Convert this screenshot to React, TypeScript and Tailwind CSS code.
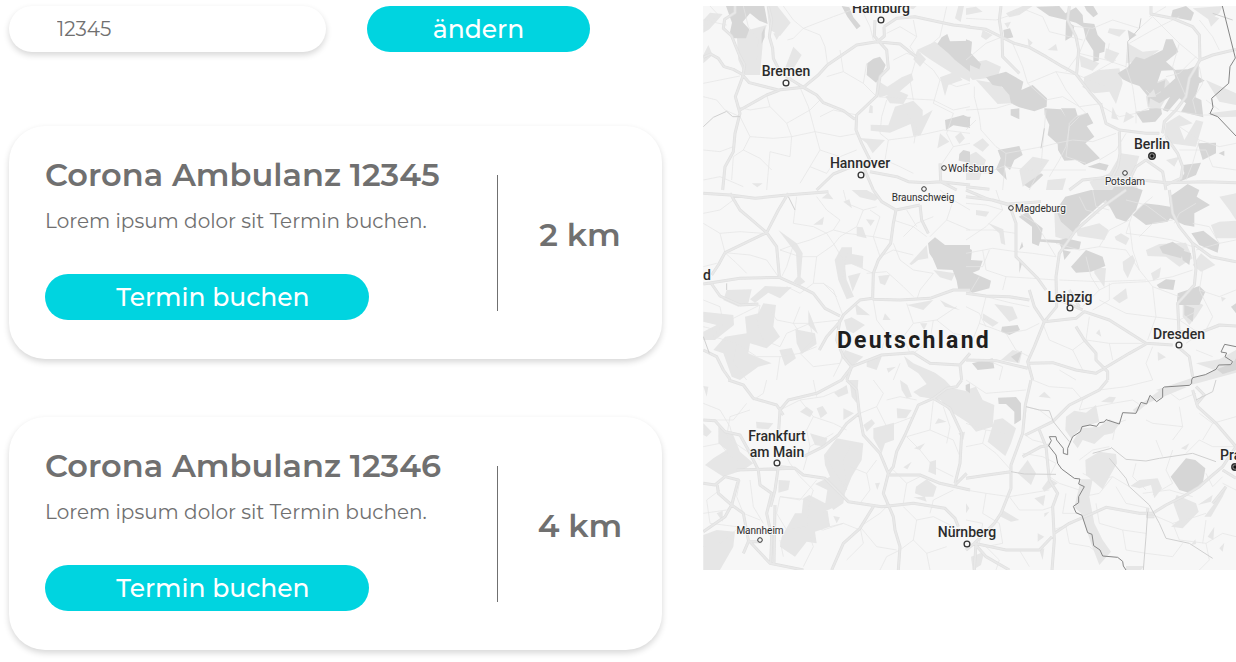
type Sheet = {
  x: number;
  y: number;
  light: string;
  dark: string;
  minor: string;
  major: string;
  grey: string;
  border: string;
};

// Each sheet of the map is drawn at three units per map unit from its own corner.
const sheets: Sheet[] = [
  {
    x: 700,
    y: 0,
    light:
      'M110 100L200 75L190 110L180 225H135L115 180ZM200 18H232L272 68L240 108L208 88ZM10 60L30 38L68 42L55 58L28 88L10 98ZM10 165L25 135L38 165L10 190ZM280 140L305 165L275 215L255 205ZM220 100H242L230 120ZM530 240L562 260L605 232L635 220L640 240L598 275L540 292L528 280ZM556 290L590 270L625 285L610 312L570 310ZM585 320L640 302L668 330V348L698 330L662 405L640 408L632 372L570 398L512 392V374L565 376ZM650 150L705 125L790 185L810 205V245L765 225L725 200L690 178ZM720 232L765 215L788 240L745 255L735 288ZM480 414L555 420L518 460L500 430ZM720 400L748 425L712 445ZM765 410L782 396L795 415L778 432ZM775 18H792L782 66L765 55ZM155 550H188L172 562ZM510 315L518 318V340L506 338ZM652 150L640 178L660 200L678 178ZM600 18L650 18L640 28Z',
    dark: 'M78 18H193L203 72L178 62L150 40L128 66L148 88L138 115H98L90 96L96 68ZM185 100L194 80V112L185 132ZM502 190L520 176L540 170L557 195L545 226L528 248L500 225ZM725 112L742 102L750 124L810 122V215L765 180L745 160L712 132ZM735 360L790 345L810 354V384L760 376L738 390ZM778 462L790 450L810 455V488L776 482ZM425 18L448 22L460 52L482 78L470 88L442 50Z',
    minor:
      'M10 60L80 75M130 18L145 80L175 120L170 200M250 18L280 60L310 85L360 105L375 140L382 190M310 85L280 115L262 120M310 85L400 50L455 30M10 250L60 240L120 228M10 290L50 300L75 330L120 350L150 410L220 415L275 410L345 395L420 410L475 400M200 285L210 320L260 370L275 410L270 470L210 455L200 570M300 262L325 320L345 395M260 370L330 330L360 300M150 410L130 450L180 475L215 510M130 450L100 470L95 540M10 450L60 455L100 440M345 395L360 450L420 470L470 450M360 450L330 500L300 550M380 230L430 215L490 250L530 290L600 295L700 300L760 330L810 320M430 215L420 150M490 250L500 190M560 300L545 350L540 400L565 420L555 480L600 500L640 520M565 420L640 410L730 390L810 400M650 170L630 240L640 300M650 170L700 210L720 240L770 260L810 250M640 60L650 110L630 140L650 170L720 110L740 20M560 100L600 80L650 110M720 240L700 310L760 340L740 400L760 440L720 500M10 540L60 530L130 560M330 500L380 520L400 490M30 18L55 45L20 75M480 18L510 80L520 120M470 345L400 330L360 350M210 320L150 330L110 320M620 340L650 380L642 430M760 440L810 430M580 180L620 160L650 170',
    major:
      'M105 18V38L74 58L70 85L95 108L118 165L134 195L128 230L106 290L120 340L105 400L100 455L75 500L68 570M10 172L32 162L55 175L72 200L100 208L125 222L148 248L235 270L310 262L355 225L382 195L470 135L530 125L600 132L650 172M120 330L200 285L245 268M310 262L350 285L370 308L430 332L465 358M205 20L215 60L208 110L218 145L220 175L240 215L275 240L310 262M552 80L590 55L645 50L700 62L760 75L810 80M525 60L523 108L535 122L560 150L565 205L540 230L530 288L470 345L468 390L485 430L510 480L490 500L520 570M552 80L553 108L530 128M510 515L590 530L625 545L680 548L720 545L810 555M350 570L400 522L480 490M720 490L722 545L770 570',
    grey: 'M10 380L40 352L80 334L98 350L120 350',
    border: '',
  },
  {
    x: 966,
    y: 0,
    light:
      'M120 40L170 18H200L160 45L130 52ZM10 190L60 180L105 200L95 230L60 235L20 240L0 220V190ZM30 240L90 250L150 290L135 310L95 312ZM245 150L270 132L275 152ZM340 165L400 190L380 212L345 200ZM420 145L460 160L440 190L415 175ZM355 230L400 210L460 205L470 250L450 312L430 275L385 280L350 262ZM485 130L530 155L580 150L540 180L480 190ZM540 290L560 250L600 235L620 260L580 330L545 320ZM680 25L770 18L760 40L730 60ZM440 320L458 360L436 355ZM480 335L505 350L472 368ZM600 370L640 345L680 370L640 380L655 420L690 360L712 365L690 440L610 430L595 405ZM720 240L810 280V315L760 305ZM725 340L810 330V350L760 352ZM0 470L30 455L60 480L40 540L0 540ZM20 435L50 415L70 435L50 455ZM160 510L200 470L250 480L215 530L170 560ZM245 540L300 535L290 570H240ZM370 545L430 520L465 460L520 468L500 530L520 575L500 590L460 590L430 620L400 600ZM30 20L50 35L0 45V25ZM115 70L135 65L125 85ZM430 85L480 90L460 110L425 98ZM720 40L760 55L735 80ZM50 90L80 105L60 120L45 110ZM185 115L200 128L188 142ZM600 480L640 470L625 500Z',
    dark: 'M210 20L280 18L298 40L330 22L350 45L352 68L385 72L395 105L418 130L415 155L400 160L398 182L382 185V152L360 118L352 82L330 68L300 60L250 48ZM355 18H382L396 42L382 52L362 32ZM300 62L325 78L318 110L298 122ZM0 118L18 125L15 160L45 192L40 208L0 190ZM60 232L120 215L172 245L166 270L200 255L243 295L242 320L205 334L160 322L135 310L130 285L108 260L80 255ZM112 90L132 85L142 112L115 118ZM134 328L160 325V358L134 346ZM235 325L285 328L300 352L285 325H328L335 348L365 338L382 370L362 378L385 410L358 430L402 475L355 495L330 480L295 482L276 450L275 432L245 405L250 375L236 345ZM620 30L660 18L684 38L675 62L615 50ZM455 220L485 202L510 170L535 178L590 150L600 118H620L637 155L600 185L628 210L586 212L570 260L545 288L520 258L495 250L470 238ZM560 255L598 240L595 265L628 235L622 210L665 208L698 195V230L716 242L700 250L688 292L706 300L712 352L645 335L660 310L640 295L605 335L590 330L612 290L580 310L552 295L548 325L585 325L588 342L568 365L530 368L508 335L550 330L545 292L570 290ZM485 90L512 105L490 120ZM95 450L160 438L170 465L145 480L132 510L115 495L122 540L90 508L104 475ZM175 555L225 520L232 525L190 565ZM365 500L400 488L428 495L420 512ZM695 430L750 428V460L710 480ZM758 460L775 452V468ZM650 495L705 488L690 525L640 545L655 520ZM0 350L15 350L0 378Z',
    minor:
      'M0 55L90 60L180 30L230 50L250 95L350 120M110 110L60 130L0 180M140 130L170 200L185 250L240 300L290 290L340 320L410 310M185 250L270 215L335 225L420 260M270 215L300 270L340 320L360 340M315 78L380 85L440 60L520 85L560 50L640 130L700 180M485 130L480 200L500 260L510 330L510 370M490 130L560 90L640 50M640 130L620 200L660 290M0 330L90 325L140 310M25 260L25 290L40 350L45 390L90 440L120 460L230 440L270 430L320 420L380 425L450 400M240 330L230 440L225 500L190 570M370 85L340 160L420 180L480 200M340 160L300 215M400 315L460 350L510 340L560 320L610 330L700 345L740 345M480 400L450 450L400 480M550 50L600 20M690 170L640 220L600 230M700 60L740 110L760 150M430 130L420 180M600 400L570 430L540 480M640 380L700 420L760 440L810 430M640 450L720 450L740 500L810 510M700 420L680 490L660 540M120 460L110 570M0 510L60 520L110 500L200 510L300 510L360 510M250 530L280 480L300 440L310 380L340 350M540 270L560 290L585 275M360 340L330 350L310 370L305 430L300 470L360 490M700 200L710 250L680 300L690 340M720 300L760 330M450 180L380 220L350 260M0 390L30 360',
    major:
      'M105 18L100 60L108 110L110 170L160 220M0 80L60 88L100 108L145 130L190 142L240 170L290 200L330 222L370 275L405 315L420 370L460 390L540 400L580 400M310 18L305 60L330 110L338 150L332 220M555 18V42L620 55L680 80L700 105L702 180L670 235L660 290L630 330L595 365L590 400M702 180L740 165L810 148M600 410L635 460L650 500L645 535L600 555M460 395L462 460L455 500L440 530M440 530L350 540L310 570M440 530L600 548L720 545L810 548M0 560L70 568M540 480L590 515L600 570M540 480L510 500L490 540',
    grey: 'M525 55L520 85L485 125L490 205M235 385L225 445M740 40L800 60',
    border: 'M769 18L808 174L792 200L788 250L737 295L741 322L732 341L755 350L810 408',
  },
  {
    x: 700,
    y: 190,
    light:
      'M235 120L290 160L308 190L302 262L316 275L300 286L280 275L292 260L288 190ZM425 172L456 172V192L490 198L488 235L456 222L435 225L440 270L462 320L440 328L415 270L404 210ZM444 258L482 248L458 305ZM470 110L488 112L500 145L470 138ZM498 88L524 90L512 108ZM340 104L372 80L368 104ZM365 25L385 8L400 28ZM455 0H500L540 22L525 32L480 22ZM430 35L448 28L456 55ZM80 300L155 298L145 340L115 350L70 330ZM150 328L195 288L275 292L240 325L205 308L165 338ZM10 365L100 375L102 405L45 450H10V425L50 405L10 395ZM135 380L175 370L190 340L228 345L220 410L240 440L200 475L150 460L145 490L215 520L175 530L120 570L95 560L70 490L40 480L75 440L140 430ZM286 418L345 430L350 462L305 492L290 460ZM325 360L354 432L325 405ZM238 480L275 474L288 505L255 528ZM435 480L490 500L455 530L425 500ZM465 340L510 376L470 374ZM432 390L455 382L495 405L460 430L440 420ZM620 345L700 330L670 360ZM555 370L572 390L548 390ZM535 258L570 254L555 286L540 280ZM628 222L680 165L685 205L655 210L635 225ZM700 240L765 250L755 272L720 262ZM720 330L780 360L735 350ZM660 400H682L672 420ZM500 510L545 500L530 540L500 530ZM560 535L588 530L565 548Z',
    dark: 'M684 160L705 142L735 165H810V302L775 300L770 272L758 240L712 238L698 205L688 190Z',
    minor:
      'M10 70L60 60L100 30M10 100L60 130L120 125L190 130M75 188L110 220L140 250M60 130L75 188L150 195L200 210L235 260M240 180L280 165L330 150L400 120L420 90L380 60L350 20M280 165L260 230L245 260M285 60L280 100L340 110L380 130L400 160L430 210L520 250M285 60L290 20M10 230L50 220M430 0L440 40L490 60L530 50M490 60L470 110L420 140L400 165L350 200L340 280M400 120L440 130L520 140L570 150M580 160L600 210L640 240L700 250M580 90L640 110L680 140M540 200L580 180L640 195M500 250L560 245L610 290L640 320M340 280L300 310L260 290M410 320L370 280L340 280M430 380L400 300L370 280M10 330L60 350L70 400L40 440L110 460L170 500L240 500L300 490L350 470M180 345L170 400L190 450L240 470L260 430L330 400L420 390M70 400L130 370L180 345M110 460L100 520L140 570M240 500L230 570M10 410L50 420M300 490L340 530L420 520L440 450M520 330L530 390L560 430L610 440L640 400L710 390L770 350M560 430L545 480M640 400L620 340M610 440L630 490M700 390L690 450L640 490M710 390L760 430L810 440M620 60L650 110M720 0L760 30L740 90L690 140M760 30L810 60M740 90L810 120M610 140L650 100L700 80M510 60L540 80L520 140L540 200M300 350L280 400L300 430M430 500L400 560M330 400L340 450L300 490M440 190L430 260L450 320M600 520L580 570M700 250L660 300L650 330M240 180L300 200L350 200M210 360L230 390L280 400L330 400',
    major:
      'M10 10L90 15L165 25L260 15L385 5M90 10L120 60L150 85L200 128M265 10L235 60L200 128L75 188L55 225L35 255M200 128L230 170L238 260M10 282L120 265L238 262L300 290L340 310L375 355L420 378M520 0L545 35L588 60L580 100L572 160L535 210L520 250L518 325L480 330L430 375L420 395L380 440L358 480M518 328L600 330L690 325L760 300L810 300M660 45L665 90L685 130M35 282L60 318L120 345L175 342M588 60L660 45M10 480L50 500L70 540L90 568M420 390L410 450L430 500L455 530L440 570M455 530L545 495L640 488L690 520L780 525L810 490M780 525L785 570',
    grey: 'M80 300V280M285 60L265 20M10 440L28 490',
    border: '',
  },
  {
    x: 966,
    y: 190,
    light:
      'M265 70L300 55L340 120L300 150L268 140ZM330 118L400 100L428 120L415 150L335 138ZM446 140L465 130L490 145L480 165L450 150ZM540 180L580 162L660 158L680 205L640 230L600 200L545 198ZM470 215L500 195L508 212L485 265L472 240ZM385 232L420 235L415 292L385 250ZM555 250L585 232L580 262L562 272ZM735 105L760 95L810 92V145H750ZM705 190L748 225L705 245L680 225ZM440 325L480 295L485 325L460 340ZM650 345L680 330L712 345L690 380L670 405L650 380ZM85 342L140 350L155 385L130 395ZM50 370L98 398L80 410L50 390ZM30 60L70 65L60 80L30 75ZM65 98L112 118L118 165L105 160L100 130ZM390 430L400 418L406 440ZM575 485L600 502L576 512ZM0 265L60 275L20 300ZM140 480L168 488L160 520L105 510ZM690 520L760 508L810 480V548L760 562L700 578L590 605L570 600L680 563L718 554L745 540ZM760 20L810 10V90L790 60ZM765 320L780 325L768 335Z',
    dark: 'M0 170L18 180L15 210L50 212L40 240L20 248L75 272L70 295L20 308L0 300ZM158 80L185 65L205 95L230 115L225 148L280 150L300 145L345 155L340 178L288 178L280 160L222 155L218 168L198 160V110ZM298 20L375 0H440L430 20L345 95L325 130L285 95L270 60ZM420 30L445 -10L500 -10L530 0L510 60L480 95L450 85ZM500 75L535 40L555 42L580 45L612 50L610 20L640 0L665 -18L700 0L692 20L732 45L685 70V110L655 105L612 85L605 95L540 105ZM676 130L712 122L760 160L755 188L700 165ZM315 230L360 180L410 200L418 228L375 245L330 248ZM290 180L315 185L295 210ZM580 170L620 155L655 178L645 205L590 190ZM645 180L675 190L670 225L650 210ZM572 285L600 268L628 270L622 300L580 295ZM635 310L700 288L718 305L700 345H632ZM655 345L685 355L680 395L655 375ZM160 205L168 220L160 250ZM168 155L172 170L160 180ZM108 410L155 405L162 420L130 435L105 425ZM18 520L80 505L85 535L35 540ZM795 350L810 340V370ZM135 500L168 482L155 518ZM752 538L800 520L810 505V540L770 552Z',
    minor:
      'M0 40L60 45L110 60M0 120L80 120L150 130M90 0L110 60L60 110L0 150M0 190L80 175L150 185L200 190L270 200M50 180L60 240L120 260L200 265L270 270M110 300L120 260M270 200L240 150L210 100L160 70M270 160L340 180L400 170L480 180L520 240L560 290L640 320M400 170L430 120L490 90M490 100L500 180L520 240M480 130L560 140L620 150L680 170M360 200L375 260L400 300L440 280L540 275L620 260L680 240M280 270L400 275L540 270M400 300L350 350M400 330L480 370L560 380L640 390L700 360M560 290L570 380L545 450M60 320L40 400L20 450M60 320L140 340L190 350M10 310L40 260M40 400L120 430L180 420L220 400M120 430L150 480L190 500M230 400L250 450L320 480L350 540M370 380L360 450L430 460L530 460M360 450L320 480M430 460L440 510M560 470L540 520L560 570M640 390L700 430L760 410M710 240L700 300L760 320L810 300M700 300L740 380L720 420L660 460M690 180L760 160L810 150M760 160L730 110L680 100M480 30L540 45L600 90M340 20L360 60L400 70M690 40L640 70L625 100M380 0L390 50L430 60M280 540L330 570M60 510L110 530L100 570M690 480L740 500M560 20L500 70L480 130M0 350L40 370L60 410M430 280L430 330L380 360M520 140L560 100L620 90M0 230L50 230L70 180',
    major:
      'M0 20L80 30L125 42L225 35M0 0L60 25L130 45L150 100V200L190 240L215 265L240 300M480 0L410 50L330 120L280 190L270 260L272 350L235 395L205 470L185 515L200 570M0 310L60 318L130 320L190 330M190 300L205 350L235 395L330 385L355 365L430 390L540 460L620 465M330 410L355 450L390 490L390 510L425 545V570M610 0L620 70L640 110L680 160L690 235L685 285L635 340L640 450M680 160L735 200L810 215M185 520L260 518L330 540L390 550L490 490L540 462M0 510L90 512L185 535M635 470L670 500L680 560M640 425L710 425L760 405L810 408M340 350L310 300M350 360L270 325',
    grey: '',
    border: 'M810 470L776 463L765 486L782 489L777 500L800 515L794 524L758 525L750 538L718 554L680 563L677 570',
  },
  {
    x: 700,
    y: 380,
    light:
      'M10 130L35 155L20 170L10 165ZM55 140L100 165L120 215L160 250L130 270L70 290L15 255L40 235L80 210L55 190ZM168 125L220 130L205 148L170 145ZM300 95L320 80L340 95L330 112ZM350 85L368 78L382 100L362 115ZM402 38L440 15L445 40L415 52ZM448 0H475L470 70L455 50ZM430 85L462 100L430 120ZM372 225L410 175L490 190L485 240L455 290L435 340L430 370L372 395L382 330L345 312L390 290L375 255ZM520 145L582 128V180L555 190L545 220L520 175ZM490 135L515 118L525 130L500 155ZM590 85L635 90L618 115H592ZM600 0L622 15L636 50L620 55L605 30ZM612 -72L640 -50L705 -22L735 0L758 25L810 35V132L745 90L722 60L660 50L640 36L680 12L655 -20L625 -40ZM642 205L675 190L660 210ZM690 245L708 240V285L685 275ZM610 262L635 245L622 268ZM648 320L680 298L710 320L700 350L670 350L645 340ZM525 310L540 308L532 330ZM236 300L270 302L265 330L235 338ZM310 355L328 345L380 372L390 440L345 455L350 490L320 485L285 530L240 500L245 470L285 400H305ZM50 400L68 392V425ZM10 465L50 450L105 455L100 500L60 570H10ZM330 160L382 175L375 200L345 195ZM390 375L430 370L400 390ZM400 408L420 412L410 430ZM640 352L675 350L680 365ZM10 18L25 20L20 50ZM715 115L740 125L705 132ZM775 160L795 155L790 180Z',
    dark: 'M797 15L810 10V40L797 30Z',
    minor:
      'M10 70L60 90L90 140L100 180M150 90L90 110L80 170L120 200L180 240M240 90L300 60L370 50L440 20M300 60L340 110L320 150L230 170M10 200L60 190L90 230L140 260M340 110L400 130L440 150M320 150L330 200L310 270M330 200L400 160M245 200L270 250L300 290L340 330L330 360L240 350M120 300L110 350L130 400L180 420M150 300L160 380L190 430M60 330L20 360L30 430L110 440M10 400L80 390L100 370M240 350L300 360L350 300M240 350L230 400L260 450L320 440L370 450L430 430L480 450M330 360L320 440L340 500L310 560M370 390L390 440L430 430M440 330L400 270L380 230M450 200L430 240L440 330M530 240L500 280L510 330L480 370M500 280L450 260M480 100L530 80L550 40L520 0M530 80L560 140L640 110M620 170L690 150L760 180M620 170L660 210L700 260L760 290M580 270L620 310L660 290M620 310L610 370M560 380L540 400L480 440L490 490L440 540M480 440L530 500L590 510M610 380L650 420L700 410L760 440M650 420L640 480L680 520L740 500M680 520L690 570M600 510L640 480M30 120L100 120L140 70M700 60L690 150M730 80L750 140L740 190M760 180L780 230M540 570L560 530L600 510M240 480L250 530M340 0L350 50M650 60L600 50L560 60M200 0L190 40L160 60M10 500L60 490L120 440M760 330L700 360L690 400',
    major:
      'M85 0L130 15L160 55L230 75L240 90L235 170M240 90L265 60L350 40L425 0L455 -40M230 75L250 105M10 120L45 122L75 155L120 165L145 210L175 270M240 260L285 265L310 285L375 295L445 365L545 380L640 370L735 385L765 415L775 440M440 0L470 30L478 100L440 130L415 165L370 200L310 230M478 100L490 165L540 220L565 280L550 340L580 410L585 450L600 500L595 570M565 280L580 260L590 215L615 165L655 75L700 55L750 85L785 160L780 250L765 310M565 285L660 285L720 310L810 330M765 315L800 280M700 55L740 25L770 20L785 0M520 380L480 445L430 490L395 570M110 270L285 265M10 310L45 315L75 290L115 300L95 375L75 410L10 455M52 315L55 340L95 375L130 400L145 480L210 550L310 570M175 270L180 315L215 340L200 400L215 470L212 550M235 260L225 330L212 380M225 375L222 550M130 520L145 485H185',
    grey: '',
    border: '',
  },
  {
    x: 966,
    y: 380,
    light:
      'M0 30L30 20L50 60L85 75L80 140L30 155L0 120ZM85 120L110 115L150 145L135 190L118 228L65 185ZM218 50L235 35L255 55ZM405 65L430 50L450 52L440 68ZM300 110L325 92L360 98L390 75L400 125L345 145L315 175L298 150ZM320 185L345 145L400 140L430 118L460 132L440 160L415 165L385 192L350 180L335 205ZM500 90L590 25L665 20L545 70L510 100ZM358 240L400 215L450 222L453 250L410 328L360 285ZM155 280L185 240L210 280L195 315ZM228 325L250 295L275 310L235 335ZM205 355L238 345L232 378ZM345 298H380L370 350L385 430L410 480L435 515L400 555L375 490L345 400L325 382ZM493 318L520 300L575 295L588 325L565 355L555 315L520 325ZM622 370L632 345L690 370L698 395L650 445L615 440L640 420ZM715 410L785 318L770 350L735 410ZM695 375L740 345L735 365ZM110 390L160 420L135 425L105 410ZM725 470L745 440L742 480ZM675 495L688 478L690 492ZM760 505L775 488L770 515ZM480 558H535L525 570H480ZM645 205L670 190L660 210ZM220 510L235 505L230 540ZM15 530L55 515L45 555L20 570ZM0 370L10 385L0 400ZM215 460L235 470L215 485ZM235 400L250 395L235 412Z',
    dark: 'M96 53L150 51L165 70V120L145 133V95L120 72H98ZM614 290L660 235L688 240L718 265L710 312L668 338L640 330Z',
    minor:
      'M0 0L60 40L180 30M200 0L250 20L320 25L350 60L340 90M260 120L220 90L180 80M340 90L440 70L500 60L530 80M350 60L400 30L480 20L560 0M0 200L50 190L90 220L135 270M50 190L60 150L0 130M120 160L60 150M180 90L170 150M240 190L200 180L170 160M170 220L230 230L270 250M270 250L250 290L280 310L340 330M0 330L60 340L130 350L190 340L250 330M130 350L160 390L230 390L260 380M60 340L50 400L100 430M100 430L110 490L60 500M300 340L290 400L340 400M300 440L310 490L370 500L410 530M260 450L320 430M0 420L50 430L40 490M440 180L450 130L480 120M350 280L390 300L440 290L490 320M440 290L400 340L350 350M390 370L400 430L470 450L540 460M470 450L480 510L540 520L620 530L650 490M550 400L620 430L690 410L720 400M620 430L640 480L720 490L770 460L810 470M720 490L730 540L700 570M530 340L610 330L680 350M510 250L500 290L540 330M620 210L600 270L620 310M660 220L700 180L740 200L810 200M640 80L650 140L620 180M650 140L560 130L540 120M700 100L740 130L810 110M740 130L710 180M720 280L740 320L770 290M770 310L810 330M720 420L710 490M340 240L380 210L430 200M450 320L480 370L550 385M620 310L560 345M60 500L100 540L90 570M160 510L190 560M600 30L640 60L690 40M570 180L590 230',
    major:
      'M195 0L178 75L170 160L135 255V325L105 400L85 430L25 490M178 165L260 125L310 75L400 30L425 0M170 230L225 200L250 195M220 150L240 200L250 300L275 340L260 380L265 480L258 570M0 295L65 285L135 275M265 460L310 430L380 400L420 382L520 400L560 400L600 375L650 350L700 320L740 285L770 260L810 200L750 130L695 80L680 30M690 75L715 45L690 20M770 270L810 295M25 490L120 510L220 510L258 470M25 490L60 530L130 570M25 490L0 510M545 385V410H565M740 370L780 320M30 490L25 570',
    grey: 'M180 80L220 90L250 92L262 125L282 150L310 185M135 275L175 282L270 283M435 202L480 238L540 243L580 235L680 220L750 245M430 235L480 295L490 320L550 375L580 430L600 475L670 490L740 535M545 395L540 470L532 570M435 205L380 220M750 0L740 35L690 60',
    border:
      'M677 0V10L670 16L595 21L590 25V52L572 65L552 46L542 72L525 67L510 100L470 98L460 132L420 119L415 126L400 128L392 139L372 135L348 140L343 155L320 170L305 205V224L292 220V205L272 180L270 170H250L256 182L248 197L270 225L275 250L287 267L325 295L342 297L338 312L355 320L338 350V368L322 379L330 398L348 406L365 458L378 463L383 497L402 510L410 528L455 532L470 544L472 558L480 570',
  },
];

type Place = { name: string; x: number; y: number; dotX: number; dotY: number; small?: boolean; start?: boolean };

const places: Place[] = [
  { name: 'Hamburg', x: 881, y: 13, dotX: 881, dotY: 20 },
  { name: 'Bremen', x: 786, y: 76, dotX: 786, dotY: 83 },
  { name: 'Hannover', x: 860, y: 168, dotX: 861, dotY: 175 },
  { name: 'Berlin', x: 1152, y: 149, dotX: 1152, dotY: 156 },
  { name: 'Leipzig', x: 1070, y: 302, dotX: 1070, dotY: 308 },
  { name: 'Dresden', x: 1179, y: 339, dotX: 1179, dotY: 345 },
  { name: 'Nürnberg', x: 967, y: 537, dotX: 967, dotY: 544 },
  { name: 'Wolfsburg', x: 948, y: 172, dotX: 944, dotY: 168, small: true, start: true },
  { name: 'Magdeburg', x: 1015, y: 212, dotX: 1011, dotY: 208, small: true, start: true },
  { name: 'Braunschweig', x: 923, y: 201, dotX: 924, dotY: 189, small: true },
  { name: 'Potsdam', x: 1125, y: 185, dotX: 1125, dotY: 173, small: true },
  { name: 'Mannheim', x: 760, y: 534, dotX: 760, dotY: 540, small: true },
];

const capitals = [
  { x: 1152, y: 156 },
  { x: 1235, y: 467 },
];

const layers: { part: 'light' | 'dark' | 'minor' | 'major' | 'grey' | 'border'; fill?: string; stroke?: string; width?: number; opacity?: number }[] = [
  { part: 'light', fill: '#e6e6e6' },
  { part: 'dark', fill: '#d6d6d6' },
  { part: 'minor', stroke: '#e5e5e5', width: 3, opacity: 0.75 },
  { part: 'major', stroke: '#e0e0e0', width: 9 },
  { part: 'major', stroke: '#e8e8e8', width: 5 },
  { part: 'grey', stroke: '#d0d0d0', width: 3 },
  { part: 'border', stroke: '#858585', width: 3 },
];

function GermanyMap() {
  return (
    <svg
      viewBox="703 6 533 564"
      preserveAspectRatio="xMinYMin slice"
      className="h-[564px] w-full bg-[#f7f7f7] font-['Roboto',sans-serif]"
      role="img"
      aria-label="Karte von Deutschland"
    >
      <g strokeLinejoin="round">
        {layers.map((layer, i) => (
          <g
            key={i}
            fill={layer.fill ?? 'none'}
            stroke={layer.stroke ?? 'none'}
            strokeWidth={layer.width}
            strokeOpacity={layer.opacity}
          >
            {sheets.map((s) => (
              <path key={`${s.x}-${s.y}`} d={s[layer.part]} transform={`translate(${s.x} ${s.y}) scale(0.33333)`} />
            ))}
          </g>
        ))}
      </g>
      <g
        className="text-[14px] font-medium"
        fill="#2b2b2b"
        stroke="#f7f7f7"
        strokeWidth="2"
        paintOrder="stroke"
        textAnchor="middle"
      >
        {places.map((p) => (
          <text
            key={p.name}
            x={p.x}
            y={p.y}
            textAnchor={p.start ? 'start' : 'middle'}
            className={p.small ? 'text-[10px] font-normal' : 'text-[14px] font-medium'}
          >
            {p.name}
          </text>
        ))}
        <text x="777" y="441">Frankfurt</text>
        <text x="777" y="457">am Main</text>
        <text x="703" y="280" textAnchor="start">d</text>
        <text x="1220" y="460" textAnchor="start">Prag</text>
        <text x="914" y="348" fill="#1f1f1f" className="text-[23px] font-bold tracking-widest">
          Deutschland
        </text>
      </g>
      <g fill="#f7f7f7" stroke="#333333">
        {places.map((p) => (
          <circle key={p.name} cx={p.dotX} cy={p.dotY} r={p.small ? 2.3 : 2.9} strokeWidth={p.small ? 1 : 1.3} />
        ))}
        <circle cx="777" cy="463" r="2.9" strokeWidth="1.3" />
        {capitals.map((c) => (
          <g key={c.x}>
            <circle cx={c.x} cy={c.y} r="3.2" strokeWidth="1.4" fill="#999999" />
            <circle cx={c.x} cy={c.y} r="1.7" fill="#111111" stroke="none" />
          </g>
        ))}
      </g>
    </svg>
  );
}

const buttonClass =
  'h-[46px] rounded-full bg-[#00d4e0] text-[25px] leading-8 font-medium text-white hover:bg-[#00c4d0]';

function ClinicCard({ name, distance }: { name: string; distance: string }) {
  return (
    <article className="flex h-[233px] rounded-[36px] bg-white pt-[49px] pb-12 pl-9 shadow-[0_3px_6px_rgba(0,0,0,0.16)]">
      <div className="-mt-5 flex flex-1 flex-col items-start">
        <h2 className="text-[32px] leading-10 font-semibold whitespace-nowrap">{name}</h2>
        <p className="mt-3 text-[20px] leading-7">Lorem ipsum dolor sit Termin buchen.</p>
        <button type="button" className={`${buttonClass} mt-[39px] w-[324px] shrink-0 pl-3`}>
          Termin buchen
        </button>
      </div>
      <div className="flex w-[165px] items-center justify-center border-l border-[#707070]">
        <p className="-mt-4 text-[32px] leading-10 font-semibold whitespace-nowrap">{distance}</p>
      </div>
    </article>
  );
}

export default function App() {
  return (
    <main className="flex items-start gap-[41px] bg-white pt-[6px] pl-[9px] pb-3 font-['Montserrat','Inter',sans-serif] text-[#707070]">
      <section className="flex w-[653px] shrink-0 flex-col">
        <form className="flex gap-[41px]" onSubmit={(e) => e.preventDefault()}>
          <input
            type="text"
            aria-label="Postleitzahl"
            defaultValue="12345"
            className="h-[46px] w-[317px] rounded-full bg-white px-12 text-[20px] shadow-[0_3px_6px_rgba(0,0,0,0.16)] outline-none"
          />
          <button type="submit" className={`${buttonClass} w-[223px]`}>
            ändern
          </button>
        </form>
        <div className="mt-[74px] flex flex-col gap-[58px]">
          <ClinicCard name="Corona Ambulanz 12345" distance="2 km" />
          <ClinicCard name="Corona Ambulanz 12346" distance="4 km" />
        </div>
      </section>
      <section className="min-w-0 flex-1 overflow-hidden">
        <GermanyMap />
      </section>
    </main>
  );
}
